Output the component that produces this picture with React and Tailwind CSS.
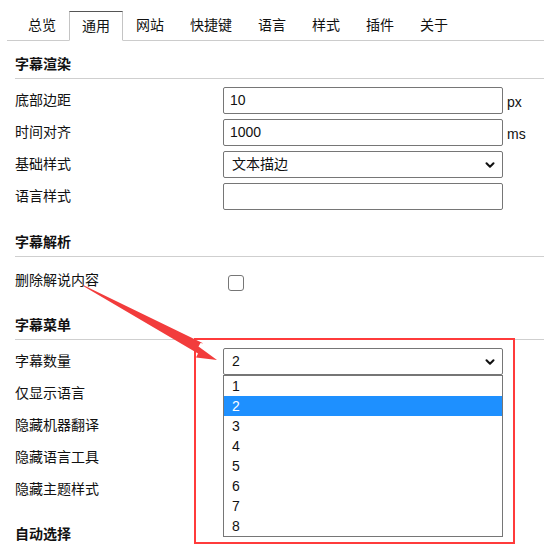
import { ChevronDown } from 'lucide-react';

const tabs = ['总览', '通用', '网站', '快捷键', '语言', '样式', '插件', '关于'];
const font = { fontFamily: '"Segoe UI", "Liberation Sans", "Noto Sans CJK SC", sans-serif' };

function Heading({ children, className = '' }) {
  return (
    <div className={`border-b border-[#cfcfcf] pb-[4px] text-[14px] font-bold leading-5 ${className}`}>
      {children}
    </div>
  );
}

function Row({ label, children, className = '' }) {
  return (
    <div className={`flex h-[27px] items-center ${className}`}>
      <div className="w-[208px] shrink-0 text-[14px]">{label}</div>
      {children}
    </div>
  );
}

function Field({ value, unit }) {
  return (
    <>
      <div className="flex h-[27px] w-[280px] items-center rounded-[2px] border border-[#767676] pl-[6px] text-[14px]">
        {value}
      </div>
      {unit && <span className="ml-[4px] mt-[4px] text-[14px]">{unit}</span>}
    </>
  );
}

function Select({ value }) {
  return (
    <div className="flex h-[27px] w-[280px] items-center justify-between rounded-[2px] border border-[#767676] pl-[8px] pr-[5px] text-[14px]">
      <span>{value}</span>
      <ChevronDown className="h-[14px] w-[14px]" strokeWidth={3.5} />
    </div>
  );
}

export default function App() {
  return (
    <div className="relative h-[546px] w-[544px] overflow-hidden bg-white text-[#111]" style={font}>
      <div className="ml-[7px] mt-[11px] flex border-b border-[#cccccc] pl-[8px]">
        {tabs.map((t) => (
          <div
            key={t}
            className={
              t === '通用'
                ? '-mb-px flex h-[30px] items-center border border-[#c4c4c4] border-t-[#555] border-b-white bg-white px-[12px] text-[14px]'
                : 'flex h-[29px] items-center px-[13px] text-[14px]'
            }
          >
            {t}
          </div>
        ))}
      </div>

      <div className="pl-[15px]">
        <Heading className="mt-[13px]">字幕渲染</Heading>
        <Row label="底部边距" className="mt-[8px]">
          <Field value="10" unit="px" />
        </Row>
        <Row label="时间对齐" className="mt-[5px]">
          <Field value="1000" unit="ms" />
        </Row>
        <Row label="基础样式" className="mt-[5px]">
          <Select value="文本描边" />
        </Row>
        <Row label="语言样式" className="mt-[5px]">
          <Field value="" />
        </Row>

        <Heading className="mt-[22px]">字幕解析</Heading>
        <div className="mt-[13px] flex items-start">
          <div className="w-[213px] shrink-0 text-[14px] leading-5">删除解说内容</div>
          <div className="mt-[5px] h-[16px] w-[16px] rounded-[3px] border border-[#767676]" />
        </div>

        <Heading className="mt-[24px]">字幕菜单</Heading>
        <Row label="字幕数量" className="mt-[8px]">
          <Select value="2" />
        </Row>
        <Row label="仅显示语言" className="mt-[5px]" />
        <Row label="隐藏机器翻译" className="mt-[5px]" />
        <Row label="隐藏语言工具" className="mt-[5px]" />
        <Row label="隐藏主题样式" className="mt-[5px]" />

        <Heading className="mt-[21px]">自动选择</Heading>
      </div>

      {/* open dropdown list */}
      <div className="absolute left-[223px] top-[375px] w-[280px] border border-[#767676] bg-white text-[14px]">
        {['1', '2', '3', '4', '5', '6', '7', '8'].map((n) => (
          <div
            key={n}
            className={`flex h-[20px] items-center pl-[8px] ${n === '2' ? 'bg-[#1e90ff] text-white' : ''}`}
          >
            {n}
          </div>
        ))}
      </div>

      {/* annotation */}
      <div className="pointer-events-none absolute left-[194px] top-[338px] h-[206px] w-[321px] border-2 border-[#ff3b3b]" />
      <svg className="pointer-events-none absolute left-0 top-0" width="544" height="546">
        <polygon
          points="83,285 203.5,343.5 200.5,343 198.5,346.5 217,360 196,357.5 198,353.5 84,286.5"
          fill="#f23c3c"
        />
      </svg>
    </div>
  );
}
